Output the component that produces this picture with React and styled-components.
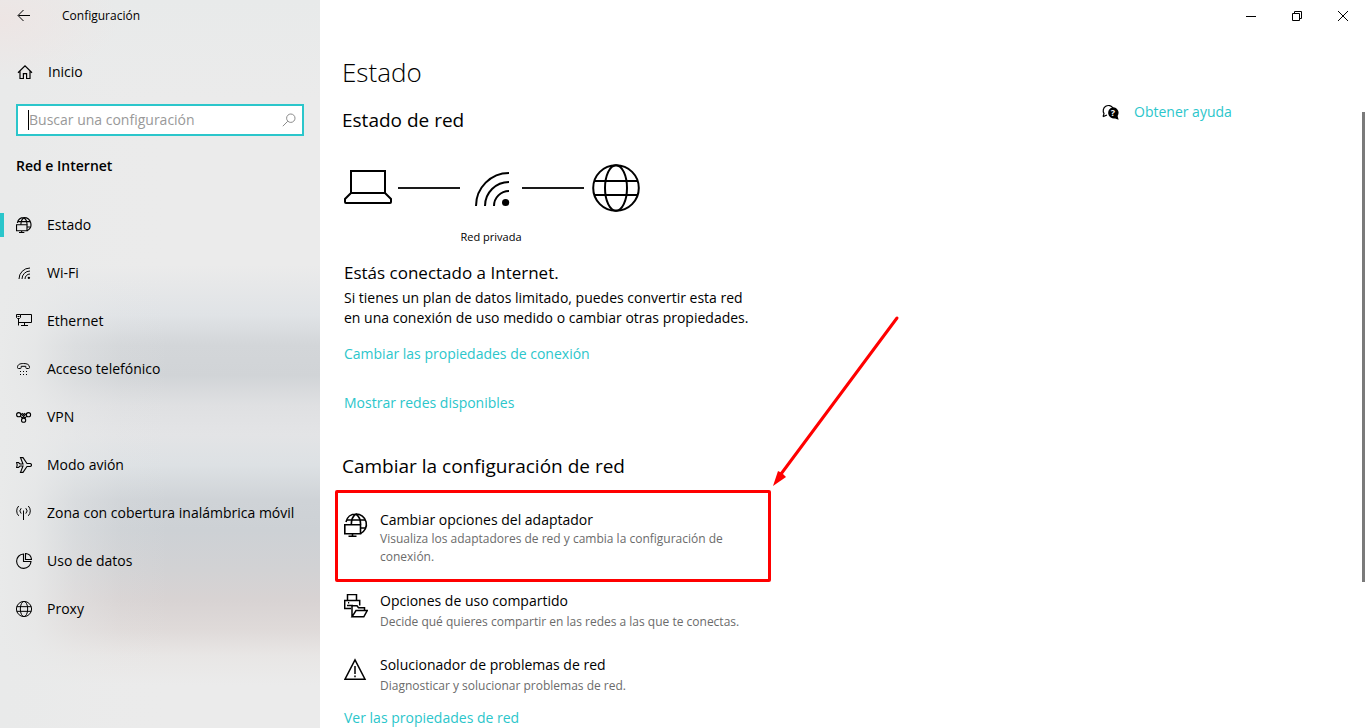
import React, { useState } from 'react';
import styled, { createGlobalStyle } from 'styled-components';

const ACCENT = '#2bc6cb';

const GlobalStyle = createGlobalStyle`
  * {
    box-sizing: border-box;
  }

  body {
    margin: 0;
    background: #fff;
    color: #000;
    font-family: 'Open Sans', 'Noto Sans', sans-serif;
    font-size: 14px;
    line-height: 20px;
  }

  h1, h2, h3, p, ul {
    margin: 0;
    padding: 0;
    font-weight: 400;
  }
`;

const Window = styled.div`
  display: flex;
  height: 100vh;
  overflow: hidden;
`;

const Sidebar = styled.aside`
  display: flex;
  flex-direction: column;
  flex: 0 0 320px;
  background:
    radial-gradient(ellipse 120px 60px at 0 20px, rgba(240, 226, 224, 0.6), transparent),
    linear-gradient(
      to right,
      #e9eaea 0,
      rgba(233, 234, 234, 0.85) 35px,
      rgba(233, 234, 234, 0.4) 75px,
      rgba(233, 234, 234, 0.1) 120px,
      rgba(233, 234, 234, 0) 170px
    ),
    linear-gradient(
      to bottom,
      #e8eaea 0,
      #ebebeb 100px,
      #ebebeb 265px,
      #e0e3e6 315px,
      #d3d6d9 345px,
      #d1d4d7 375px,
      #dfe0e2 405px,
      #e3e4e6 435px,
      #dde1e4 465px,
      #cfd3d7 500px,
      #cdd1d5 530px,
      #d2d2d4 570px,
      #d8d3d3 600px,
      #dfdad9 630px,
      #e8e6e5 655px,
      #ebebeb 685px
    );
`;

const TitleBar = styled.div`
  display: flex;
  align-items: center;
  flex: 0 0 32px;
  font-size: 12px;
`;

const BackButton = styled.button`
  display: flex;
  align-items: center;
  justify-content: center;
  width: 48px;
  height: 32px;
  margin-right: 14px;
  padding: 0;
  border: none;
  background: transparent;
`;

const HomeLink = styled.a`
  display: flex;
  align-items: center;
  gap: 15px;
  height: 40px;
  margin-top: 20px;
  padding-left: 17px;
  color: #000;
  text-decoration: none;
`;

const SearchBox = styled.label`
  display: flex;
  align-items: center;
  height: 32px;
  margin: 12px 16px 0;
  padding: 0 6px 0 10px;
  border: 2px solid ${ACCENT};
  background: #fff;
`;

const Caret = styled.span`
  width: 1px;
  height: 20px;
  background: #000;
`;

const SearchInput = styled.input`
  flex: 1;
  min-width: 0;
  padding: 0;
  border: none;
  outline: none;
  background: transparent;
  font: inherit;

  &::placeholder {
    color: #999;
    opacity: 1;
  }
`;

const Category = styled.h2`
  margin: 20px 0 25px 16px;
  font-size: 14px;
  font-weight: 600;
  line-height: 20px;
`;

const NavItem = styled.a`
  display: flex;
  align-items: center;
  height: 48px;
  color: #000;
  text-decoration: none;
`;

const NavMarker = styled.span`
  width: 4px;
  height: 24px;
  margin-right: 12px;
  background: ${({ $active }) => ($active ? ACCENT : 'transparent')};
`;

const NavLabel = styled.span`
  margin-left: 15px;
`;

const Main = styled.main`
  display: flex;
  flex-direction: column;
  flex: 1;
  min-width: 0;
`;

const WindowControls = styled.div`
  display: flex;
  justify-content: flex-end;
  flex: 0 0 32px;
`;

const ControlButton = styled.button`
  display: flex;
  align-items: center;
  justify-content: center;
  width: 46px;
  padding: 0 0 0 2px;
  border: none;
  background: transparent;
`;

const Body = styled.div`
  display: flex;
  flex: 1;
  min-height: 0;
`;

const Content = styled.div`
  flex: 1;
  min-width: 0;
  padding: 20px 0 0 22px;
`;

const PageTitle = styled.h1`
  font-size: 26px;
  font-weight: 300;
  line-height: 40px;
`;

const SectionTitle = styled.h2`
  margin-top: ${({ $top }) => $top}px;
  font-size: 19px;
  line-height: 28px;
`;

const Section = styled.section`
  padding-left: 2px;
`;

const Diagram = styled.div`
  display: grid;
  grid-template-columns: 54px 62px 62px 70px 48px;
  align-items: center;
  margin-top: 30px;
`;

const DiagramCenter = styled.div`
  display: flex;
  justify-content: center;
`;

const Connector = styled.span`
  width: 62px;
  height: 2px;
  background: #1a1a1a;
`;

const NetworkType = styled.p`
  width: 294px;
  margin-top: 15px;
  font-size: 11px;
  text-align: center;
`;

const StatusTitle = styled.h3`
  margin-top: 14px;
  font-size: 17px;
  line-height: 24px;
`;

const StatusText = styled.p`
  max-width: 412px;
  margin-top: 3px;
`;

const TextLink = styled.a`
  display: block;
  width: fit-content;
  margin-top: ${({ $top = 0 }) => $top}px;
  color: ${ACCENT};
  text-decoration: none;
`;

const Option = styled.a`
  display: flex;
  gap: 12px;
  max-width: 436px;
  padding-left: 2px;
  color: #000;
  text-decoration: none;

  & + & {
    margin-top: 24px;
  }

  svg {
    flex: none;
    margin-top: 3px;
  }
`;

const OptionTitle = styled.span`
  display: block;
`;

const OptionText = styled.span`
  display: block;
  margin-top: 2px;
  color: #6b6b6b;
  font-size: 12px;
  line-height: 18px;
`;

const Highlight = styled.div`
  position: relative;
  width: 436px;
  margin: 10px 0 9px -7px;
  padding: 17px 4px 13px;
  border: 3px solid #f00;
  border-radius: 2px;

  ${OptionText} {
    margin-top: 0;
  }
`;

const Arrow = styled.svg`
  position: absolute;
  left: 100%;
  bottom: 100%;
`;

const Help = styled.aside`
  display: flex;
  align-items: center;
  gap: 15px;
  width: 260px;
  height: 20px;
  margin-top: 70px;
`;

const ScrollThumb = styled.div`
  width: 3px;
  height: 470px;
  margin-top: 80px;
  background: #7a7a7a;
`;

const Icon = ({ size = 16, box = size, stroke = 1, children }) => (
  <svg
    width={size}
    height={size}
    viewBox={`0 0 ${box} ${box}`}
    fill="none"
    stroke="#000"
    strokeWidth={stroke}
    aria-hidden="true"
  >
    {children}
  </svg>
);

const AdapterIcon = ({ size = 24, stroke = 1.6 }) => (
  <Icon size={size} box={24} stroke={stroke}>
    <path d="M2 9C3 4 7 1 11.8 1A10.3 10.3 0 0 1 16.5 20.6" />
    <path d="M3 7h18M16.5 15h5" />
    <path d="M11.8 1C9 3 7.3 7 7.3 11.5M11.8 1c3 2 4.8 6 4.8 10.5" />
    <path d="M.8 11.7h15.7v9H.8zM8.5 20.7v2.6M4.5 23.2h8" />
  </Icon>
);

const WifiIcon = ({ size, stroke }) => (
  <Icon size={size} box={48} stroke={stroke}>
    <path d="M9 42A33 33 0 0 1 42 9M18 42A24 24 0 0 1 42 18M27 42A15 15 0 0 1 42 27" />
    <circle cx="38.6" cy="38.5" r="3.6" fill="#000" stroke="none" />
  </Icon>
);

const GlobeIcon = ({ size, stroke }) => (
  <Icon size={size} box={48} stroke={stroke}>
    <circle cx="24" cy="24" r="22.8" />
    <ellipse cx="24" cy="24" rx="11" ry="22.8" />
    <path d="M2.5 17h43M2.5 31h43" />
  </Icon>
);

const LaptopIcon = () => (
  <Icon size={48} stroke={2}>
    <path d="M7 7h34v22H7z" />
    <path d="M7 29l-6 6v3q0 1 1 1h44q1 0 1-1v-3l-6-6" />
  </Icon>
);

const EthernetIcon = () => (
  <Icon>
    <path d="M.5 1.5h4v3l-1 1h-2l-1-1zM2.5 5.5v7M4.5 1.5h11v8H2.5M8.5 9.5v3M5 12.5h7" />
    <path d="M1.5 3.5h2" />
  </Icon>
);

const PhoneIcon = () => (
  <Icon>
    <path d="M1.5 6.3C1.5 3.5 4 2.5 7.5 2.5s6 1 6 3.8v.2q0 1-1 1h-1.8q-.9 0-.9-1V5.3H5.2v1.2q0 1-.9 1H2.5q-1 0-1-1z" />
    <path d="M4 10.5h1M7 10.5h1M10 10.5h1M4 13.5h1M7 13.5h1M10 13.5h1" />
  </Icon>
);

const VpnIcon = () => (
  <Icon stroke={1.1}>
    <circle cx="2.7" cy="5.7" r="2.1" />
    <circle cx="12.5" cy="5.7" r="2.1" />
    <circle cx="7.6" cy="11.2" r="2.1" />
    <path d="M4.4 4.2l4.6 5M10.8 4.2l-4.6 5M4.4 7l1.8 2.2M10.8 7L9 9.2M6.2 4.2l1.4 1.4L9 4.2" />
  </Icon>
);

const PlaneIcon = () => (
  <Icon stroke={1.1}>
    <path d="M.6 5.5h1.9L4 7h3L4.5.6H7l4 5.9h3.3q1.2.4 1.2 1.5t-1.2 1.5H11l-4 5.9H4.5L7 9H4l-1.5 1.5H.6L1.2 8z" />
  </Icon>
);

const HotspotIcon = () => (
  <Icon>
    <path d="M7.5 5.5V15M5.2 3.2a3.8 3.8 0 0 0 0 5.4M9.8 3.2a3.8 3.8 0 0 1 0 5.4" />
    <path d="M2.7 1a7 7 0 0 0 0 9.8M12.3 1a7 7 0 0 1 0 9.8" />
  </Icon>
);

const DataIcon = () => (
  <Icon stroke={1.1}>
    <path d="M7.5 1A7.2 7.2 0 1 0 15 8.5H7.5z" />
    <path d="M9.5.5q5.5.5 6 6h-6z" />
  </Icon>
);

const SharingIcon = () => (
  <Icon size={24} stroke={1.5}>
    <path d="M3.5 6.5v-6h9v6M7 14.5H.7v-8h15v5M3 11.5h6" />
    <path d="M4 8.7h1.2" />
    <path d="M8 22.8V11.7h5l1.5 2h6v3M8 22.8l4-6.2h11.2l-3.4 6.2z" />
  </Icon>
);

const WarningIcon = () => (
  <Icon size={24} stroke={1.5}>
    <path d="M11 1.8l10 19.4H1zM11 8v8M11 17.6v1.6" />
  </Icon>
);

const HelpIcon = () => (
  <svg width="17" height="17" viewBox="0 0 17 17" aria-hidden="true">
    <path
      d="M1 12.6l1-3A5.2 5.2 0 1 1 11 4M1 12.6l4-1.6"
      fill="none"
      stroke="#000"
      strokeWidth="1.2"
    />
    <path d="M11 3.2a5.6 5.6 0 0 1 4.6 8.7l1 3.8-3.5-1.3A5.7 5.7 0 1 1 11 3.2z" fill="#000" />
    <text x="10.8" y="12.3" fill="#fff" fontSize="9" fontWeight="700" textAnchor="middle">?</text>
  </svg>
);

const navItems = [
  { label: 'Estado', icon: <AdapterIcon size={16} stroke={1.7} /> },
  { label: 'Wi-Fi', icon: <WifiIcon size={16} stroke={3} /> },
  { label: 'Ethernet', icon: <EthernetIcon /> },
  { label: 'Acceso telefónico', icon: <PhoneIcon /> },
  { label: 'VPN', icon: <VpnIcon /> },
  { label: 'Modo avión', icon: <PlaneIcon /> },
  { label: 'Zona con cobertura inalámbrica móvil', icon: <HotspotIcon /> },
  { label: 'Uso de datos', icon: <DataIcon /> },
  { label: 'Proxy', icon: <GlobeIcon size={16} stroke={3} /> },
];

const SettingsOption = ({ icon, title, text }) => (
  <Option href="#">
    {icon}
    <span>
      <OptionTitle>{title}</OptionTitle>
      <OptionText>{text}</OptionText>
    </span>
  </Option>
);

const App = () => {
  const [active, setActive] = useState('Estado');
  const [query, setQuery] = useState('');

  return (
    <>
      <GlobalStyle />
      <Window>
        <Sidebar>
          <TitleBar>
            <BackButton type="button" aria-label="Atrás">
              <Icon>
                <path d="M14 7.5H2.5M7.5 2l-5.5 5.5L7.5 13" />
              </Icon>
            </BackButton>
            Configuración
          </TitleBar>
          <HomeLink href="#">
            <Icon stroke={1.2}>
              <path d="M1 8.7L8 1.8l7 6.9M3 7.2v7.3h3.4V9.6h3.2v4.9H13V7.2" />
            </Icon>
            Inicio
          </HomeLink>
          <SearchBox>
            <Caret />
            <SearchInput
              type="text"
              aria-label="Buscar una configuración"
              placeholder="Buscar una configuración"
              value={query}
              onChange={(e) => setQuery(e.target.value)}
            />
            <svg width="14" height="14" viewBox="0 0 14 14" fill="none" stroke="#8a8a8a" aria-hidden="true">
              <circle cx="8.8" cy="5.2" r="4.2" />
              <path d="M5.8 8.2L.8 13.2" />
            </svg>
          </SearchBox>
          <Category>Red e Internet</Category>
          <nav>
            {navItems.map(({ label, icon }) => (
              <NavItem key={label} href="#" onClick={() => setActive(label)}>
                <NavMarker $active={active === label} />
                {icon}
                <NavLabel>{label}</NavLabel>
              </NavItem>
            ))}
          </nav>
        </Sidebar>

        <Main>
          <WindowControls>
            <ControlButton type="button" aria-label="Minimizar">
              <Icon size={10}>
                <path d="M0 5.5h10" />
              </Icon>
            </ControlButton>
            <ControlButton type="button" aria-label="Restaurar">
              <Icon size={10}>
                <path d="M.5 2.5h7v7h-7zM2.5 2.5v-2h7v7h-2" />
              </Icon>
            </ControlButton>
            <ControlButton type="button" aria-label="Cerrar">
              <Icon size={10}>
                <path d="M0 0l10 10M10 0L0 10" />
              </Icon>
            </ControlButton>
          </WindowControls>
          <Body>
            <Content>
              <PageTitle>Estado</PageTitle>
              <SectionTitle $top={14}>Estado de red</SectionTitle>
              <Section>
                <Diagram>
                  <LaptopIcon />
                  <Connector />
                  <DiagramCenter>
                    <WifiIcon size={48} stroke={2} />
                  </DiagramCenter>
                  <Connector />
                  <GlobeIcon size={48} stroke={2} />
                </Diagram>
                <NetworkType>Red privada</NetworkType>
                <StatusTitle>Estás conectado a Internet.</StatusTitle>
                <StatusText>
                  Si tienes un plan de datos limitado, puedes convertir esta red en una conexión de uso medido o
                  cambiar otras propiedades.
                </StatusText>
                <TextLink href="#" $top={16}>Cambiar las propiedades de conexión</TextLink>
                <TextLink href="#" $top={29}>Mostrar redes disponibles</TextLink>
              </Section>
              <SectionTitle $top={39}>Cambiar la configuración de red</SectionTitle>
              <Highlight>
                <SettingsOption
                  icon={<AdapterIcon />}
                  title="Cambiar opciones del adaptador"
                  text="Visualiza los adaptadores de red y cambia la configuración de conexión."
                />
                <Arrow width="132" height="180" viewBox="0 0 132 180" aria-hidden="true">
                  <path d="M129 5L13 161" stroke="#f00" strokeWidth="3" strokeLinecap="round" />
                  <path d="M5 173l5-15 4 2 4 4z" fill="#f00" />
                </Arrow>
              </Highlight>
              <SettingsOption
                icon={<SharingIcon />}
                title="Opciones de uso compartido"
                text="Decide qué quieres compartir en las redes a las que te conectas."
              />
              <SettingsOption
                icon={<WarningIcon />}
                title="Solucionador de problemas de red"
                text="Diagnosticar y solucionar problemas de red."
              />
              <Section>
                <TextLink href="#" $top={13}>Ver las propiedades de red</TextLink>
              </Section>
            </Content>
            <Help>
              <HelpIcon />
              <TextLink href="#">Obtener ayuda</TextLink>
            </Help>
            <ScrollThumb />
          </Body>
        </Main>
      </Window>
    </>
  );
};

export default App;
